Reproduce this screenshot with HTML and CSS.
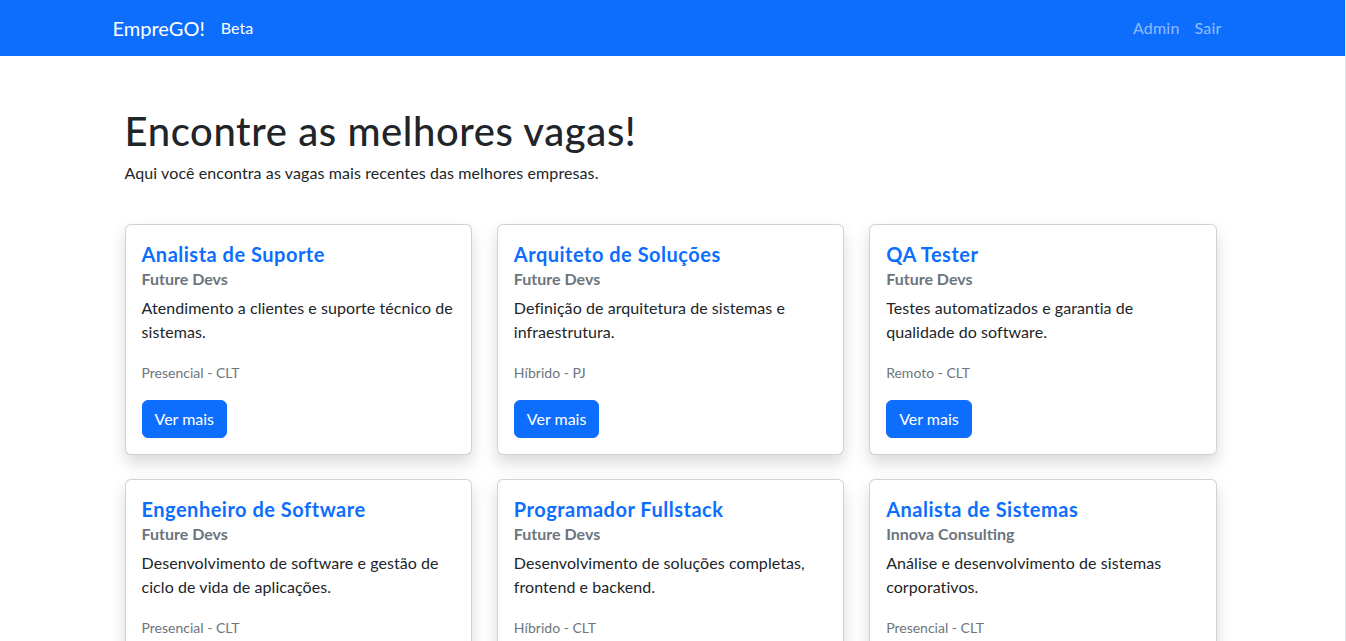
FILE: index.html
```html
<!DOCTYPE html>
<html lang="pt-BR">
<head>
<meta charset="utf-8">
<title>EmpreGO!</title>
<link rel="stylesheet" href="styles.css">
</head>
<body>
<nav class="navbar">
  <div class="nav-inner">
    <div class="nav-left">
      <a class="brand" href="#">EmpreGO!</a>
      <span class="beta">Beta</span>
    </div>
    <div class="nav-right">
      <a class="nav-link" href="#">Admin</a>
      <a class="nav-link" href="#">Sair</a>
    </div>
  </div>
</nav>
<main class="main">
  <h1 class="title">Encontre as melhores vagas!</h1>
  <p class="lead">Aqui você encontra as vagas mais recentes das melhores empresas.</p>
  <div class="grid">
    <div class="card">
      <h5 class="card-title">Analista de Suporte</h5>
      <h6 class="card-subtitle">Future Devs</h6>
      <p class="card-text">Atendimento a clientes e suporte técnico de sistemas.</p>
      <p class="card-meta">Presencial - CLT</p>
      <a class="btn" href="#">Ver mais</a>
    </div>
    <div class="card">
      <h5 class="card-title">Arquiteto de Soluções</h5>
      <h6 class="card-subtitle">Future Devs</h6>
      <p class="card-text">Definição de arquitetura de sistemas e infraestrutura.</p>
      <p class="card-meta">Híbrido - PJ</p>
      <a class="btn" href="#">Ver mais</a>
    </div>
    <div class="card">
      <h5 class="card-title">QA Tester</h5>
      <h6 class="card-subtitle">Future Devs</h6>
      <p class="card-text">Testes automatizados e garantia de qualidade do software.</p>
      <p class="card-meta">Remoto - CLT</p>
      <a class="btn" href="#">Ver mais</a>
    </div>
    <div class="card">
      <h5 class="card-title">Engenheiro de Software</h5>
      <h6 class="card-subtitle">Future Devs</h6>
      <p class="card-text">Desenvolvimento de software e gestão de ciclo de vida de aplicações.</p>
      <p class="card-meta">Presencial - CLT</p>
      <a class="btn" href="#">Ver mais</a>
    </div>
    <div class="card">
      <h5 class="card-title">Programador Fullstack</h5>
      <h6 class="card-subtitle">Future Devs</h6>
      <p class="card-text">Desenvolvimento de soluções completas, frontend e backend.</p>
      <p class="card-meta">Híbrido - CLT</p>
      <a class="btn" href="#">Ver mais</a>
    </div>
    <div class="card">
      <h5 class="card-title">Analista de Sistemas</h5>
      <h6 class="card-subtitle">Innova Consulting</h6>
      <p class="card-text">Análise e desenvolvimento de sistemas corporativos.</p>
      <p class="card-meta">Presencial - CLT</p>
      <a class="btn" href="#">Ver mais</a>
    </div>
  </div>
</main>
</body>
</html>
```
FILE: styles.css
```css
* { box-sizing: border-box; }
html, body { margin: 0; }
body {
  font-family: Lato, "Noto Sans", sans-serif;
  font-size: 16px;
  line-height: 1.5;
  color: #212529;
  background: #fff;
  border-right: 1px solid #dee2e6;
  min-height: 100vh;
}
.navbar {
  background: #0d6efd;
  height: 56px;
}
.nav-inner {
  width: 1140px;
  margin: 0 auto;
  padding: 0 12px;
  height: 100%;
  display: flex;
  align-items: center;
  justify-content: space-between;
}
.nav-left { display: flex; align-items: center; }
.brand {
  color: #fff;
  text-decoration: none;
  font-size: 20px;
  margin-left: -2px;
  margin-right: 16px;
}
.beta { color: #fff; font-size: 16px; }
.nav-right { display: flex; margin-right: 2px; }
.nav-link {
  color: rgba(255,255,255,.55);
  text-decoration: none;
  padding: 8px 7px 8px 8px;
  letter-spacing: .2px;
}
.main {
  width: 1140px;
  margin: 0 auto;
  padding: 51px 26px 0 22px;
}
.title {
  font-size: 40px;
  font-weight: 500;
  line-height: 1.2;
  margin: 0 0 6px;
  letter-spacing: .6px;
}
.lead { margin: 0 0 39px; letter-spacing: .1px; }
.grid {
  display: grid;
  grid-template-columns: repeat(3, 1fr);
  column-gap: 25px;
  row-gap: 24px;
}
.card {
  border: 1px solid rgba(0,0,0,.175);
  border-radius: 6px;
  padding: 16px;
  box-shadow: 0 .5rem 1rem rgba(0,0,0,.15);
  background: #fff;
}
.card-title {
  font-size: 20px;
  font-weight: 700;
  line-height: 1.2;
  color: #0d6efd;
  margin: 1px 0 7px;
  letter-spacing: .5px;
}
.card-subtitle {
  font-size: 16px;
  font-weight: 700;
  line-height: 1.2;
  color: #6c757d;
  margin: -4px 0 8px;
}
.card-text { margin: 0 0 16px; letter-spacing: .07px; }
.card-meta { margin: 0 0 15px; padding-top: 1px; font-size: 14px; color: #6c757d; line-height: 24px; }
.btn {
  display: inline-block;
  background: #0d6efd;
  color: #fff;
  text-decoration: none;
  padding: 6px 12px;
  border-radius: 6px;
  line-height: 24px;
  border: 1px solid #0d6efd;
}
```
